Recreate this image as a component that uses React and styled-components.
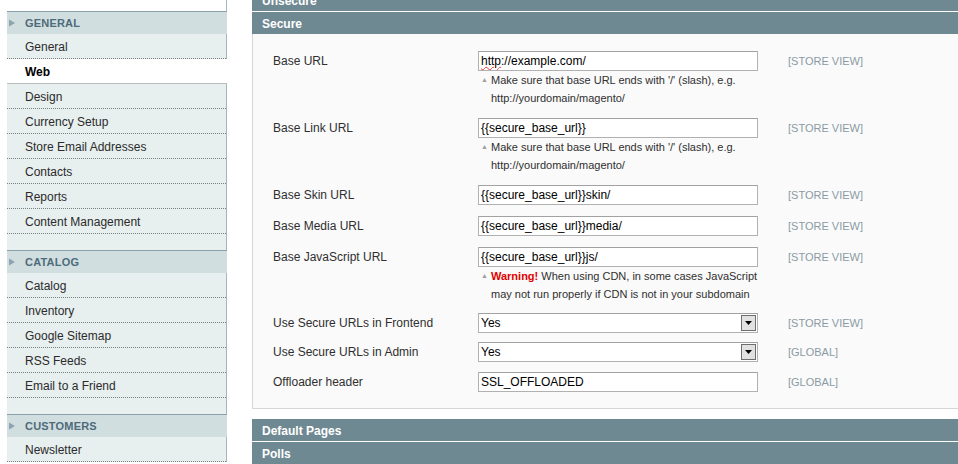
import React from 'react';
import styled, { createGlobalStyle } from 'styled-components';

const GlobalStyle = createGlobalStyle`
  html, body {
    margin: 0;
    padding: 0;
    background: #fff;
    font-family: "Liberation Sans", Arial, sans-serif;
    font-size: 12px;
    color: #2f2f2f;
  }
`;

const Page = styled.div`
  width: 958px;
  height: 464px;
  overflow: hidden;
  display: flex;
  align-items: flex-start;
  padding-left: 7px;
  box-sizing: border-box;
  gap: 25px;
`;

const Sidebar = styled.nav`
  width: 220px;
  flex-shrink: 0;
  display: flex;
  flex-direction: column;
`;

const TopTab = styled.div`
  height: 11px;
  background: #fff;
  border-right: 1px solid #a9b6bb;
`;

const Group = styled.div`
  display: flex;
  flex-direction: column;
  background: #e7efef;
  padding-bottom: ${p => (p.$last ? 0 : 16)}px;
  border-right: 1px solid #a5b6bd;
`;

const GroupHeader = styled.div`
  height: 22px;
  line-height: 22px;
  border-top: 1px solid #8aa0aa;
  background: #d1dee0;
  margin-right: -1px;
  display: flex;
  align-items: center;
  font-size: 11px;
  font-weight: bold;
  color: #4e6b79;
  text-transform: uppercase;
  letter-spacing: 0.2px;

  & svg {
    width: 18px;
    flex-shrink: 0;
  }
`;

const Item = styled.div`
  height: 24px;
  line-height: 26px;
  padding-left: 18px;
  font-size: 12px;
  color: ${p => (p.$active ? '#000' : '#2b2b2b')};
  font-weight: ${p => (p.$active ? 'bold' : 'normal')};
  background: ${p => (p.$active ? '#fff' : 'transparent')};
  border-bottom: 1px ${p => (p.$active ? 'solid #bcbcbc' : 'dotted #7d7d7d')};
  margin-right: ${p => (p.$active ? '-1px' : '0')};
  white-space: nowrap;
  overflow: hidden;
`;

const Main = styled.main`
  width: 760px;
  flex-shrink: 0;
  display: flex;
  flex-direction: column;
  margin-top: -11px;
`;

const SectionHeader = styled.div`
  height: 22px;
  line-height: 24px;
  padding-left: 10px;
  background: #6f8992;
  color: #fff;
  font-weight: bold;
  font-size: 12px;
  margin-top: ${p => p.$gap ?? 1}px;
  overflow: hidden;
`;

const Body = styled.div`
  background: #fafafa;
  border: 1px solid #d6d6d6;
  border-top: none;
  padding: 12px 20px 11px;
  display: flex;
  flex-direction: column;
`;

const Row = styled.div`
  display: grid;
  grid-template-columns: 205px 280px auto;
  padding: 5px 0 ${p => p.$pb ?? 6}px;
  align-items: start;
`;

const Label = styled.div`
  line-height: 20px;
  font-size: 12px;
  color: #2f2f2f;
  white-space: nowrap;
`;

const Scope = styled.div`
  line-height: 20px;
  font-size: 11px;
  color: #8a9aa5;
  padding-left: 30px;
  white-space: nowrap;
`;

const Field = styled.div`
  display: flex;
  flex-direction: column;
`;

const Input = styled.div`
  height: 20px;
  box-sizing: border-box;
  border: 1px solid #b1b1b1;
  border-top-color: #a2a2a2;
  background: #fff;
  padding-left: 2px;
  line-height: 18px;
  font-size: 12px;
  color: #000;
  white-space: nowrap;
  overflow: hidden;
`;

const Spell = styled.span`
  text-decoration-line: underline;
  text-decoration-style: wavy;
  text-decoration-color: #e23a3a;
  text-decoration-thickness: 1px;
  text-underline-offset: 1px;
`;

const SelectBox = styled(Input)`
  display: flex;
  align-items: center;
  justify-content: space-between;
  padding-right: 1px;
`;

const SelectButton = styled.span`
  width: 15px;
  height: 16px;
  box-sizing: border-box;
  border: 1px solid #6e6e6e;
  background: #e1e1e1;
  display: flex;
  align-items: center;
  justify-content: center;
`;

const Note = styled.div`
  display: flex;
  font-size: 11px;
  line-height: 18px;
  color: #2f2f2f;
  white-space: nowrap;
`;

const NoteArrow = styled.span`
  width: 13px;
  flex-shrink: 0;
  font-size: 7px;
  color: #a0a0a0;
  padding-left: 3px;
  box-sizing: border-box;
`;

const Warning = styled.strong`
  color: #e10000;
`;

const groups = [
  {
    title: 'General',
    items: ['General', 'Web', 'Design', 'Currency Setup', 'Store Email Addresses', 'Contacts', 'Reports', 'Content Management'],
  },
  {
    title: 'Catalog',
    items: ['Catalog', 'Inventory', 'Google Sitemap', 'RSS Feeds', 'Email to a Friend'],
  },
  {
    title: 'Customers',
    items: ['Newsletter'],
    last: true,
  },
];

const slashNote = (
  <>Make sure that base URL ends with '/' (slash), e.g.<br />http://yourdomain/magento/</>
);

const rows = [
  { label: 'Base URL', value: <><Spell>http</Spell>://example.com/</>, scope: '[STORE VIEW]', note: slashNote },
  { label: 'Base Link URL', value: '{{secure_base_url}}', scope: '[STORE VIEW]', note: slashNote },
  { label: 'Base Skin URL', value: '{{secure_base_url}}skin/', scope: '[STORE VIEW]' },
  { label: 'Base Media URL', value: '{{secure_base_url}}media/', scope: '[STORE VIEW]' },
  {
    label: 'Base JavaScript URL',
    value: '{{secure_base_url}}js/',
    scope: '[STORE VIEW]',
    pb: 5,
    note: (
      <><Warning>Warning!</Warning> When using CDN, in some cases JavaScript<br />may not run properly if CDN is not in your subdomain</>
    ),
  },
  { label: 'Use Secure URLs in Frontend', value: 'Yes', scope: '[STORE VIEW]', select: true, pb: 4 },
  { label: 'Use Secure URLs in Admin', value: 'Yes', scope: '[GLOBAL]', select: true, pb: 5 },
  { label: 'Offloader header', value: 'SSL_OFFLOADED', scope: '[GLOBAL]', pb: 5 },
];

function Arrow() {
  return (
    <svg viewBox="0 0 18 22" height="22">
      <path d="M2 7.5 L8 11 L2 14.5 Z" fill="#8da3ad" />
    </svg>
  );
}

function Caret() {
  return (
    <svg width="7" height="4" viewBox="0 0 7 4">
      <path d="M0 0 H7 L3.5 4 Z" fill="#000" />
    </svg>
  );
}

export default function App() {
  return (
    <>
      <GlobalStyle />
      <Page>
        <Sidebar>
          <TopTab />
          {groups.map(group => (
            <Group key={group.title} $last={group.last}>
              <GroupHeader>
                <Arrow />
                {group.title}
              </GroupHeader>
              {group.items.map(item => (
                <Item key={item} $active={item === 'Web'}>
                  {item}
                </Item>
              ))}
            </Group>
          ))}
        </Sidebar>
        <Main>
          <SectionHeader $gap={0}>Unsecure</SectionHeader>
          <SectionHeader>Secure</SectionHeader>
          <Body>
            {rows.map(row => (
              <Row key={row.label} $pb={row.pb}>
                <Label>{row.label}</Label>
                <Field>
                  {row.select ? (
                    <SelectBox>
                      <span>{row.value}</span>
                      <SelectButton>
                        <Caret />
                      </SelectButton>
                    </SelectBox>
                  ) : (
                    <Input>{row.value}</Input>
                  )}
                  {row.note && (
                    <Note>
                      <NoteArrow>▲</NoteArrow>
                      <span>{row.note}</span>
                    </Note>
                  )}
                </Field>
                <Scope>{row.scope}</Scope>
              </Row>
            ))}
          </Body>
          <SectionHeader $gap={10}>Default Pages</SectionHeader>
          <SectionHeader>Polls</SectionHeader>
        </Main>
      </Page>
    </>
  );
}
